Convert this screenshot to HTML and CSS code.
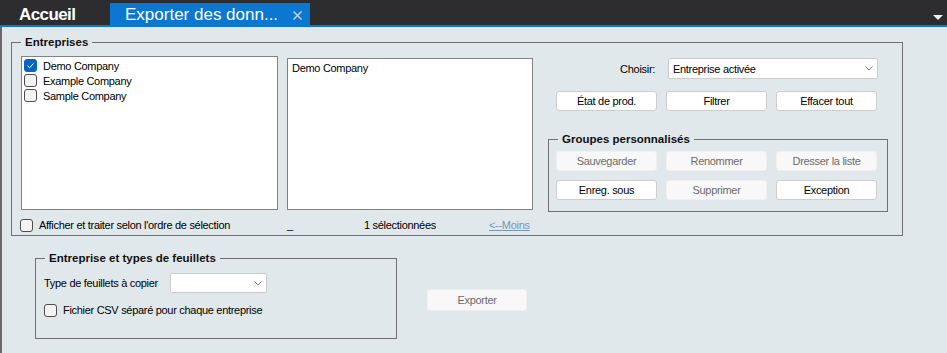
FILE: index.html
```html
<!DOCTYPE html>
<html lang="fr">
<head>
<meta charset="utf-8">
<title>Exporter des données</title>
<link rel="stylesheet" href="styles.css">
</head>
<body>
<div class="topbar">
  <div class="tab-home">Accueil</div>
  <div class="tab-active">
    <span class="tab-title">Exporter des donn...</span>
    <svg class="tab-close" width="11" height="9" viewBox="0 0 11 9"><path d="M1.5 0.5 L9.5 8.5 M9.5 0.5 L1.5 8.5" stroke="#c9d6e3" stroke-width="1.4" fill="none"/></svg>
  </div>
  <div class="topbar-spacer"></div>
  <span class="bar-menu"></span>
</div>

<div class="main">
  <fieldset class="group g-companies">
    <legend>Entreprises</legend>
    <div class="g1-body">
      <div class="g1-left">
        <div class="lists">
          <div class="listbox list-all">
            <div class="list-item"><span class="cb checked"><svg width="13" height="13" viewBox="0 0 13 13"><path d="M3.5 6.8 L5.6 8.8 L9.6 4.3" stroke="#fff" stroke-width="1" fill="none"/></svg></span>Demo Company</div>
            <div class="list-item"><span class="cb"></span>Example Company</div>
            <div class="list-item"><span class="cb"></span>Sample Company</div>
          </div>
          <div class="listbox list-sel">
            <div class="sel-item">Demo Company</div>
          </div>
        </div>
        <div class="g1-footer">
          <div class="check-row order-check"><span class="cb"></span>Afficher et traiter selon l'ordre de sélection</div>
          <span class="dash">_</span>
          <span class="count">1 sélectionnées</span>
          <span class="less-link">&lt;--Moins</span>
        </div>
      </div>
      <div class="g1-right">
        <div class="choose-row">
          <span class="choose-label">Choisir:</span>
          <div class="combo combo-wide"><span>Entreprise activée</span><svg class="chev" width="8" height="5" viewBox="0 0 8 5"><path d="M0.5 0.5 L4 4 L7.5 0.5" stroke="#7b7b7b" fill="none"/></svg></div>
        </div>
        <div class="top-btns">
          <button class="btn">État de prod.</button>
          <button class="btn">Filtrer</button>
          <button class="btn">Effacer tout</button>
        </div>
        <fieldset class="group g-custom">
          <legend>Groupes personnalisés</legend>
          <div class="btn-grid">
            <button class="btn disabled">Sauvegarder</button>
            <button class="btn disabled">Renommer</button>
            <button class="btn disabled">Dresser la liste</button>
            <button class="btn">Enreg. sous</button>
            <button class="btn disabled">Supprimer</button>
            <button class="btn">Exception</button>
          </div>
        </fieldset>
      </div>
    </div>
  </fieldset>

  <div class="bottom-row">
    <fieldset class="group g-types">
      <legend>Entreprise et types de feuillets</legend>
      <div class="types-body">
        <div class="type-row">
          <span class="type-label">Type de feuillets à copier</span>
          <div class="combo combo-small"><span></span><svg class="chev" width="8" height="5" viewBox="0 0 8 5"><path d="M0.5 0.5 L4 4 L7.5 0.5" stroke="#7b7b7b" fill="none"/></svg></div>
        </div>
        <div class="check-row csv-check"><span class="cb"></span>Fichier CSV séparé pour chaque entreprise</div>
      </div>
    </fieldset>
    <button class="btn disabled export-btn">Exporter</button>
  </div>
</div>
</body>
</html>
```

FILE: styles.css
```css
* { box-sizing: border-box; }

html, body {
  margin: 0;
  padding: 0;
  background: #e1e8eb;
}

body {
  font-family: "Liberation Sans", Arial, sans-serif;
  font-size: 11px;
  letter-spacing: -0.3px;
  color: #000;
  height: 353px;
  overflow: hidden;
}

/* ---------- top bar ---------- */
.topbar {
  display: flex;
  align-items: flex-end;
  height: 27px;
  background: #2d2d30;
  border-bottom: 2px solid #0b77d0;
}

.tab-home {
  width: 110px;
  height: 25px;
  padding: 5px 0 0 19px;
  line-height: 20px;
  font-size: 17px;
  font-weight: bold;
  letter-spacing: -0.6px;
  color: #fff;
}

.tab-active {
  display: flex;
  align-items: flex-start;
  width: 200px;
  height: 22px;
  padding: 1px 7px 0 15px;
  background: #0b77d0;
  color: #fff;
  font-size: 17px;
  letter-spacing: 0;
  line-height: 21px;
  align-self: flex-end;
}

.tab-title { flex: none; }

.tab-close {
  margin-left: auto;
  margin-top: 7px;
}

.topbar-spacer { flex: 1; }

.bar-menu {
  align-self: flex-start;
  width: 0;
  height: 0;
  margin: 15px 4px 0 0;
  border-left: 5px solid transparent;
  border-right: 5px solid transparent;
  border-top: 5px solid #f2f2f2;
}

/* ---------- main ---------- */
.main {
  height: 326px;
  border-left: 2px solid #6a6a6a;
  padding-top: 8px;
}

.group {
  margin: 0;
  padding: 0;
  min-width: 0;
  border: 1px solid #707070;
}

.group legend {
  margin-left: 9px;
  padding: 0 4px;
  font-size: 11.5px;
  font-weight: bold;
  letter-spacing: 0;
  line-height: 14px;
  color: #111;
}

.g-companies {
  width: 892px;
  margin-left: 9px;
}

.g1-body {
  display: flex;
  padding: 7px 0 3px 9px;
}

.g1-left {
  width: 512px;
  flex: none;
}

.lists {
  display: flex;
  align-items: flex-end;
  gap: 9px;
}

.listbox {
  background: #fff;
  border: 1px solid #828282;
}

.list-all {
  width: 257px;
  height: 154px;
  padding: 1px 0 0 2px;
}

.list-sel {
  width: 246px;
  height: 152px;
  padding: 2px 0 0 4px;
}

.list-item {
  display: flex;
  align-items: center;
  height: 15px;
  gap: 6px;
  white-space: nowrap;
}

.sel-item {
  line-height: 14px;
}

.cb {
  flex: none;
  width: 13px;
  height: 13px;
  border: 1px solid #4d4d4d;
  border-radius: 3px;
  background: #f3f3f3;
  display: flex;
}

.cb.checked {
  background: #0065c3;
  border-color: #0065c3;
}

.cb.checked svg { margin: -1px; }

.check-row {
  display: flex;
  align-items: center;
  gap: 6px;
  white-space: nowrap;
  line-height: 13px;
}

.g1-footer {
  display: flex;
  align-items: center;
  height: 14px;
  margin-top: 8px;
}

.order-check {
  width: 267px;
  margin-left: -1px;
  flex: none;
}

.dash {
  width: 77px;
  flex: none;
}

.count {
  width: 125px;
  flex: none;
}

.less-link {
  color: #7896b5;
  text-decoration: underline;
}

/* ---------- right panel ---------- */
.g1-right {
  display: flex;
  flex-direction: column;
  padding-left: 15px;
}

.choose-row {
  display: flex;
  align-items: center;
  margin-top: 2px;
}

.choose-label {
  width: 107px;
  margin-right: 13px;
  text-align: right;
}

.combo {
  display: flex;
  align-items: center;
  justify-content: space-between;
  background: #fff;
  border: 1px solid #cbcbcb;
  border-radius: 2px;
  padding: 0 4px 0 4px;
}

.combo-wide {
  width: 210px;
  height: 21px;
}

.combo-small {
  width: 97px;
  height: 20px;
}

.btn {
  width: 101px;
  height: 20px;
  padding: 0;
  font-family: inherit;
  font-size: 11px;
  letter-spacing: -0.3px;
  color: #000;
  background: #fff;
  border: 1px solid #cdcdcd;
  border-radius: 3px;
}

.btn.disabled {
  color: #6b6b6b;
  background: #f8f8f8;
  border-color: #f0f0f0;
}

.top-btns {
  display: flex;
  gap: 9px;
  margin: 12px 0 0 8px;
}

.g-custom {
  width: 340px;
  margin-top: 21px;
}

.btn-grid {
  display: grid;
  grid-template-columns: repeat(3, 101px);
  column-gap: 9px;
  row-gap: 9px;
  padding: 5px 0 11px 7px;
}

/* ---------- bottom ---------- */
.bottom-row {
  display: flex;
  align-items: flex-start;
  margin: 15px 0 0 33px;
}

.g-types {
  width: 362px;
  flex: none;
}

.types-body {
  padding: 8px 0 21px 8px;
}

.type-row {
  display: flex;
  align-items: center;
  height: 20px;
}

.type-label {
  width: 126px;
  flex: none;
}

.csv-check {
  margin-top: 11px;
}

.export-btn {
  width: 100px;
  height: 22px;
  margin: 38px 0 0 30px;
}
```
